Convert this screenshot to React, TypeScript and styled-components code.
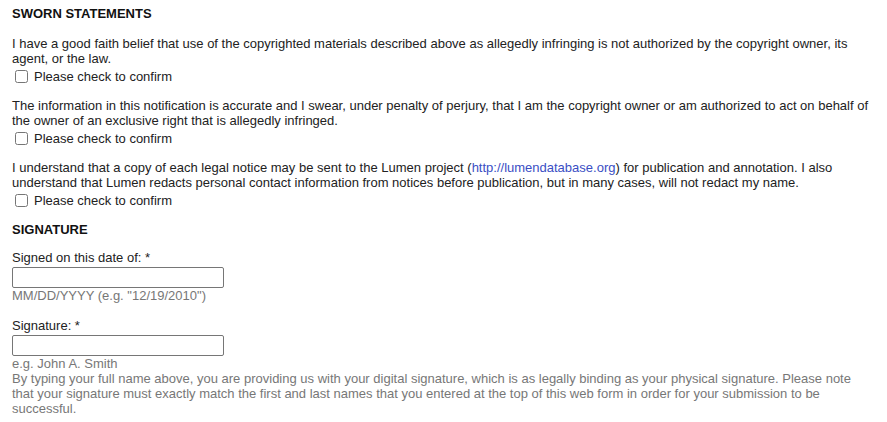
import React from "react";
import styled, { createGlobalStyle } from "styled-components";

const Global = createGlobalStyle`
  html, body { margin: 0; padding: 0; background: #fff; }
  body { font-family: "Liberation Sans", Arial, sans-serif; font-size: 13px; color: #222; }
`;

const Page = styled.div`
  padding: 6px 12px 0 12px;
  width: 862px;
`;

const Heading = styled.h3<{ $after?: number }>`
  margin: 0 0 ${(p) => p.$after ?? 14}px 0;
  font-size: 13px;
  line-height: 16px;
  font-weight: bold;
  color: #111;
`;

const Statement = styled.div`
  margin-bottom: 12px;
`;

const Text = styled.p`
  margin: 0;
  font-size: 13px;
  line-height: 15px;
  color: #222;
`;

const CheckRow = styled.label`
  display: flex;
  align-items: center;
  gap: 6px;
  height: 20px;
  padding-left: 3px;
  font-size: 13px;
  color: #222;
`;

const Box = styled.input`
  width: 13px;
  height: 13px;
  margin: 0;
`;

const Link = styled.a`
  color: #3a4ec4;
  text-decoration: none;
`;

const Field = styled.div`
  margin-bottom: 15px;
`;

const Label = styled.div`
  font-size: 13px;
  line-height: 15px;
  color: #222;
  margin-bottom: 2px;
`;

const Input = styled.input`
  display: block;
  box-sizing: border-box;
  width: 212px;
  height: 21px;
  margin: 0;
  border: 1px solid #767676;
  border-radius: 2px;
  padding: 1px 2px;
  font-family: "Liberation Sans", Arial, sans-serif;
`;

const Hint = styled.div`
  font-size: 13px;
  line-height: 15px;
  color: #777;
`;

const statements = [
  <>I have a good faith belief that use of the copyrighted materials described above as allegedly infringing is not authorized by the copyright owner, its agent, or the law.</>,
  <>The information in this notification is accurate and I swear, under penalty of perjury, that I am the copyright owner or am authorized to act on behalf of the owner of an exclusive right that is allegedly infringed.</>,
  <>I understand that a copy of each legal notice may be sent to the Lumen project (<Link href="#">http://lumendatabase.org</Link>) for publication and annotation. I also understand that Lumen redacts personal contact information from notices before publication, but in many cases, will not redact my name.</>,
];

export default function App() {
  return (
    <Page>
      <Global />
      <Heading>SWORN STATEMENTS</Heading>
      {statements.map((s, i) => (
        <Statement key={i}>
          <Text>{s}</Text>
          <CheckRow>
            <Box type="checkbox" />
            Please check to confirm
          </CheckRow>
        </Statement>
      ))}
      <Heading $after={12}>SIGNATURE</Heading>
      <Field>
        <Label>Signed on this date of: *</Label>
        <Input type="text" />
        <Hint>MM/DD/YYYY (e.g. "12/19/2010")</Hint>
      </Field>
      <Field>
        <Label>Signature: *</Label>
        <Input type="text" />
        <Hint>e.g. John A. Smith</Hint>
        <Hint>
          By typing your full name above, you are providing us with your digital signature, which is as legally binding as your physical signature. Please note that your signature must exactly match the first and last names that you entered at the top of this web form in order for your submission to be successful.
        </Hint>
      </Field>
    </Page>
  );
}
